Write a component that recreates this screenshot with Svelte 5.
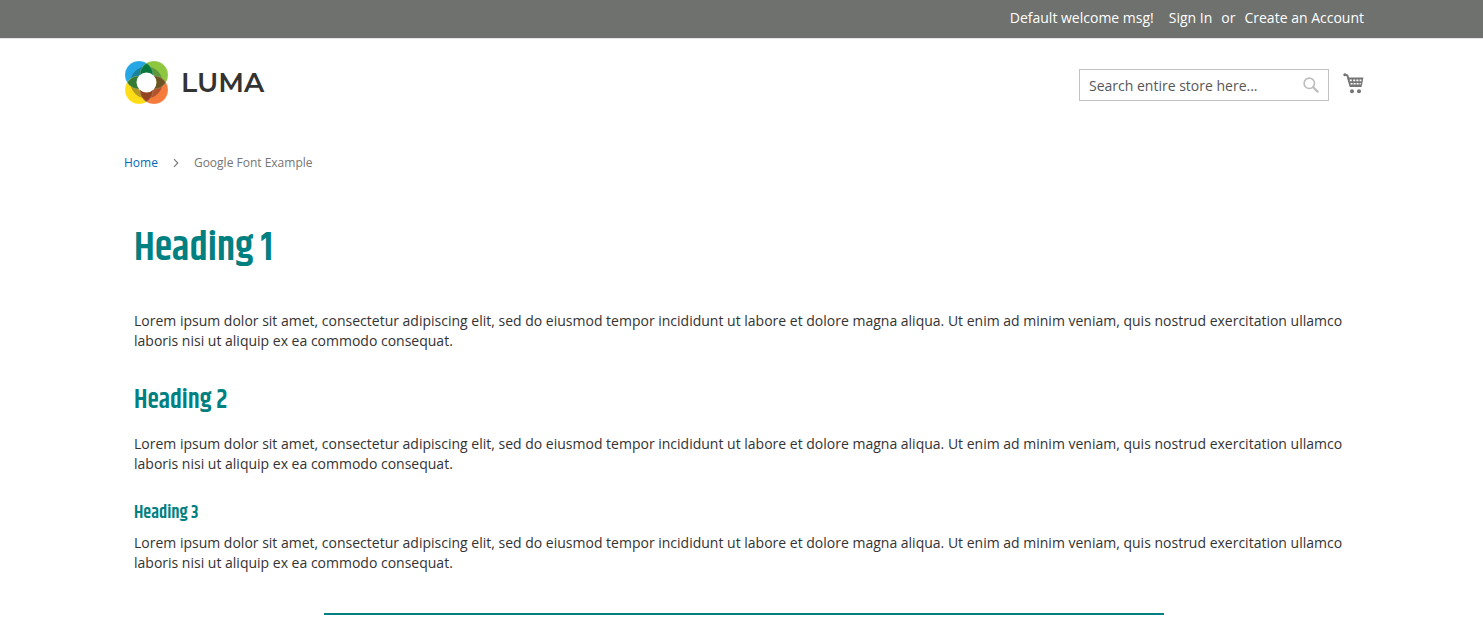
<script>
  const lorem =
    'Lorem ipsum dolor sit amet, consectetur adipiscing elit, sed do eiusmod tempor incididunt ut labore et dolore magna aliqua. Ut enim ad minim veniam, quis nostrud exercitation ullamco laboris nisi ut aliquip ex ea commodo consequat.';
</script>

<div class="page">
  <div class="panel">
    <div class="container links">
      <span class="welcome">Default welcome msg!</span>
      <a href="#signin">Sign In</a>
      <span class="or">or</span>
      <a href="#create">Create an Account</a>
    </div>
  </div>

  <header class="container header">
    <a class="logo" href="#home" aria-label="Luma">
      <svg class="mark" viewBox="0 0 44 44" aria-hidden="true">
        <defs>
          <clipPath id="tl"><circle cx="15" cy="15" r="14" /></clipPath>
          <clipPath id="tr"><circle cx="30" cy="15" r="14" /></clipPath>
          <clipPath id="bl"><circle cx="15" cy="30" r="14" /></clipPath>
          <clipPath id="br"><circle cx="30" cy="30" r="14" /></clipPath>
        </defs>
        <circle cx="15" cy="15" r="14" fill="#26a7e3" />
        <circle cx="30" cy="15" r="14" fill="#8dc63f" />
        <circle cx="15" cy="30" r="14" fill="#ffde17" />
        <circle cx="30" cy="30" r="14" fill="#f47b3c" />
        <g clip-path="url(#tl)"><circle cx="22.5" cy="22.5" r="16" fill="#1a829c" /></g>
        <g clip-path="url(#tr)"><circle cx="22.5" cy="22.5" r="16" fill="#5f983c" /></g>
        <g clip-path="url(#bl)"><circle cx="22.5" cy="22.5" r="16" fill="#b49a20" /></g>
        <g clip-path="url(#br)"><circle cx="22.5" cy="22.5" r="16" fill="#b3532b" /></g>
        <g clip-path="url(#tl)"><circle cx="30" cy="15" r="14" fill="#08783e" /></g>
        <g clip-path="url(#tl)"><circle cx="15" cy="30" r="14" fill="#347a35" /></g>
        <g clip-path="url(#tr)"><circle cx="30" cy="30" r="14" fill="#6b5421" /></g>
        <g clip-path="url(#bl)"><circle cx="30" cy="30" r="14" fill="#94451f" /></g>
        <g fill="none" stroke="#fff" stroke-opacity=".3" stroke-width=".6">
          <circle cx="15" cy="15" r="14" /><circle cx="30" cy="15" r="14" />
          <circle cx="15" cy="30" r="14" /><circle cx="30" cy="30" r="14" />
        </g>
        <circle cx="22.5" cy="22.5" r="10" fill="#fff" />
      </svg>
      <span class="word">LUMA</span>
    </a>
    <div class="tools">
      <form class="search" role="search" onsubmit={(e) => e.preventDefault()}>
        <input type="text" aria-label="Search" placeholder="Search entire store here..." />
        <button type="submit" aria-label="Search">
          <svg width="16" height="16" viewBox="0 0 16 16" fill="none" stroke="#bdbdbd">
            <circle cx="6.3" cy="6.3" r="5.2" stroke-width="1.6" />
            <path d="M10.2 10.2L14.6 14.6" stroke-width="2.2" stroke-linecap="round" />
          </svg>
        </button>
      </form>
      <a class="cart" href="#cart" aria-label="My Cart">
        <svg width="21" height="22" viewBox="0 0 21 22">
          <path d="M1.6 1.4L4.4 2.4L7.4 13H18" fill="none" stroke="#757575" stroke-width="2" stroke-linejoin="round" />
          <circle cx="1.8" cy="1.8" r="1.5" fill="#757575" />
          <path d="M4.6 4.4H20.4L18.6 14H7.2Z" fill="#757575" />
          <path d="M6.8 7.4h2M10.2 7.4h2M13.4 7.4h2M16.6 7.4h1.8M7.6 10.8h2M10.6 10.8h2M13.6 10.8h2M16.6 10.8h1.2" stroke="#fff" stroke-width="1.6" />
          <circle cx="9" cy="18.2" r="2" fill="#757575" />
          <circle cx="16" cy="18.2" r="2" fill="#757575" />
        </svg>
      </a>
    </div>
  </header>

  <nav class="container crumbs" aria-label="Breadcrumb">
    <a href="#home">Home</a>
    <svg width="6" height="10" viewBox="0 0 6 10" aria-hidden="true">
      <path d="M1 1.2L4.8 5L1 8.8" fill="none" stroke="#757575" stroke-width="1.1" />
    </svg>
    <span>Google Font Example</span>
  </nav>

  <main class="container">
    <div class="content">
      <h1>Heading 1</h1>
      <p>{lorem}</p>
      <h2>Heading 2</h2>
      <p>{lorem}</p>
      <h3>Heading 3</h3>
      <p>{lorem}</p>
      <hr />
    </div>
  </main>
</div>

<style>
  :global(body) {
    background: #fff;
  }
  .page {
    font: 14px/20px 'Open Sans', 'Noto Sans', sans-serif;
    color: #333;
  }
  .panel {
    background: #6e716e;
    border-bottom: 1px solid #e4e4e4;
  }
  .container {
    box-sizing: border-box;
    max-width: 1245px;
    margin: 0 auto;
    padding-left: 5px;
  }
  .links {
    display: flex;
    justify-content: flex-end;
    align-items: center;
    padding-top: 8px;
    padding-bottom: 10px;
    color: #fff;
  }
  .links a {
    color: #fff;
    text-decoration: none;
  }
  .welcome {
    margin-right: 15px;
  }
  .or {
    margin: 0 9px;
  }
  .header {
    display: flex;
    justify-content: space-between;
    align-items: flex-start;
    padding-top: 21px;
  }
  .logo {
    display: flex;
    align-items: flex-start;
    gap: 13px;
    color: #333;
    text-decoration: none;
  }
  .mark {
    width: 44px;
    height: 44px;
  }
  .word {
    font: 600 27px/46px Montserrat, Lato, sans-serif;
  }
  .tools {
    display: flex;
    align-items: flex-start;
    gap: 14px;
    padding-top: 9px;
  }
  .search {
    display: flex;
    align-items: center;
    box-sizing: border-box;
    width: 250px;
    height: 32px;
    border: 1px solid #c2c2c2;
    padding: 0 9px;
  }
  .search input {
    flex: 1;
    min-width: 0;
    border: 0;
    padding: 2px 0 0;
    outline: 0;
    background: none;
    font: inherit;
    color: #333;
  }
  .search input::placeholder {
    color: #575757;
    opacity: 1;
  }
  .search button {
    display: flex;
    border: 0;
    padding: 0;
    background: none;
  }
  .cart {
    display: flex;
    padding-top: 4px;
  }
  .crumbs {
    display: flex;
    align-items: center;
    gap: 15px;
    padding-top: 47px;
    font-size: 12px;
    line-height: 20px;
    color: #757575;
  }
  .crumbs a {
    color: #006bb4;
    text-decoration: none;
  }
  .content {
    padding: 50px 10px 21px;
  }
  h1,
  h2,
  h3 {
    margin: 0;
    color: #008080;
    font-family: Khand, 'Liberation Sans Narrow', 'Roboto Condensed', 'Open Sans Condensed', 'DejaVu Sans Condensed', sans-serif;
    font-weight: 600;
  }
  h1 {
    font-size: 40px;
    line-height: 52px;
    margin-bottom: 36px;
  }
  h2 {
    font-size: 26px;
    line-height: 32px;
    margin: 34px 0 17px;
  }
  h3 {
    font-size: 18px;
    line-height: 20px;
    margin: 29px 0 10px;
  }
  p {
    margin: 0;
  }
  hr {
    max-width: 840px;
    height: 2px;
    border: 0;
    margin: 40px auto 0;
    background: #008080;
  }
</style>
